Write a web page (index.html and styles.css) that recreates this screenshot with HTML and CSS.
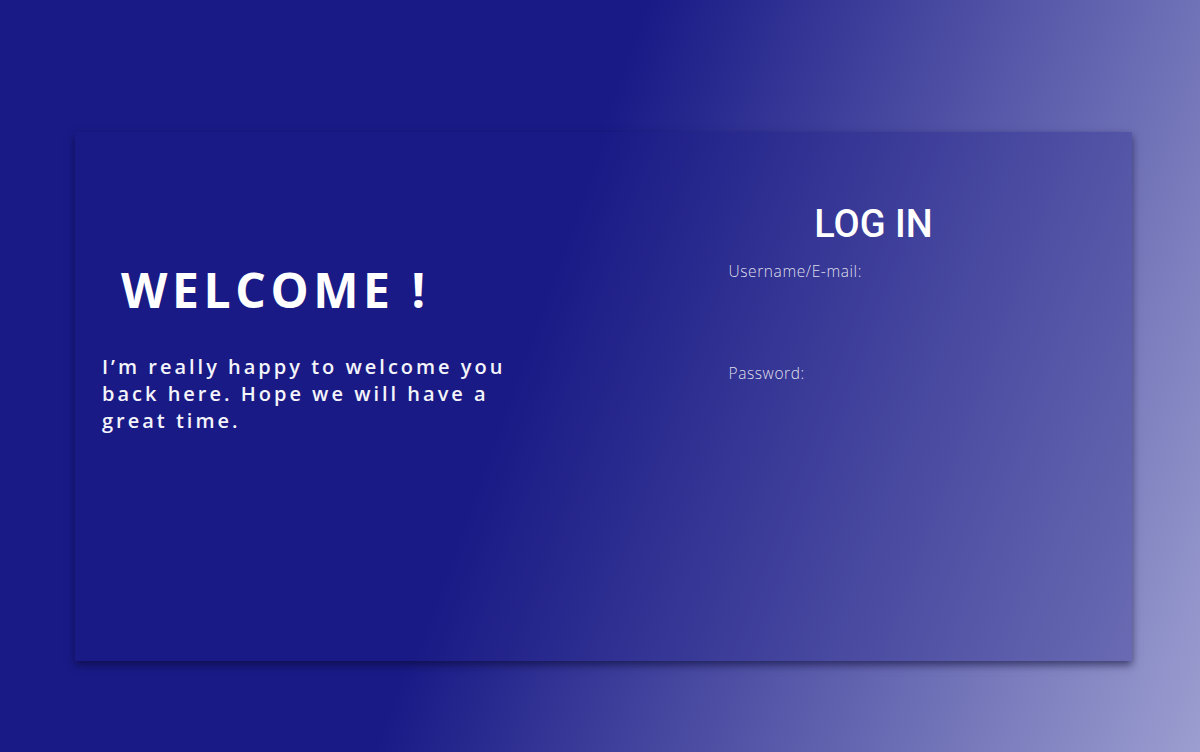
FILE: index.html
```html
<!DOCTYPE html>
<html lang="en">
<head>
<meta charset="utf-8">
<title>Log in</title>
<link rel="stylesheet" href="styles.css">
</head>
<body>
  <main class="card">
    <section class="welcome">
      <h1 class="welcome-title">WELCOME !</h1>
      <p class="welcome-text">I’m really happy to welcome you back here. Hope we will have a great time.</p>
    </section>
    <section class="login">
      <form class="login-form">
        <h2 class="login-title">LOG IN</h2>
        <label class="field">
          <span class="field-label">Username/E-mail:</span>
          <input class="field-input" type="text">
        </label>
        <label class="field">
          <span class="field-label">Password:</span>
          <input class="field-input" type="password">
        </label>
      </form>
    </section>
  </main>
</body>
</html>
```

FILE: styles.css
```css
html, body {
  margin: 0;
  padding: 0;
  height: 100%;
}

body {
  width: 1200px;
  height: 752px;
  overflow: hidden;
  background: linear-gradient(110deg, #191a86 0%, #191a86 44%, #9c9ed0 100%);
  font-family: "Open Sans", "Liberation Sans", sans-serif;
  color: #fff;
}

.card {
  box-sizing: border-box;
  width: 1057px;
  height: 529px;
  margin: 132px 0 0 75px;
  background: rgba(25, 26, 134, 0.3);
  box-shadow: 0 4px 8px rgba(10, 10, 50, 0.6);
  display: grid;
  grid-template-columns: 528px 1fr;
}

.welcome {
  padding: 129px 0 0 27px;
}

.welcome-title {
  margin: 0 0 34px 19px;
  font-size: 48px;
  font-weight: 700;
  letter-spacing: 4.6px;
  line-height: 58px;
}

.welcome-text {
  margin: 0;
  width: 430px;
  font-size: 20px;
  font-weight: 600;
  letter-spacing: 3px;
  line-height: 27px;
  color: #f4f4fb;
}

.login {
  display: flex;
  justify-content: center;
  padding-top: 70px;
}

.login-form {
  width: 290px;
  margin-left: 12px;
  display: flex;
  flex-direction: column;
}

.login-title {
  margin: 0 0 15px;
  text-align: center;
  font-family: "Roboto", "Liberation Sans", sans-serif;
  font-size: 38px;
  font-weight: 500;
  line-height: 44px;
}

.field {
  display: flex;
  flex-direction: column;
  height: 102px;
}

.field-label {
  font-size: 15.5px;
  font-weight: 300;
  letter-spacing: 0.6px;
  line-height: 20px;
  color: rgba(255, 255, 255, 0.85);
}

.field-input {
  margin-top: 6px;
  height: 30px;
  background: transparent;
  border: none;
  outline: none;
  color: #fff;
  font: inherit;
}
```
